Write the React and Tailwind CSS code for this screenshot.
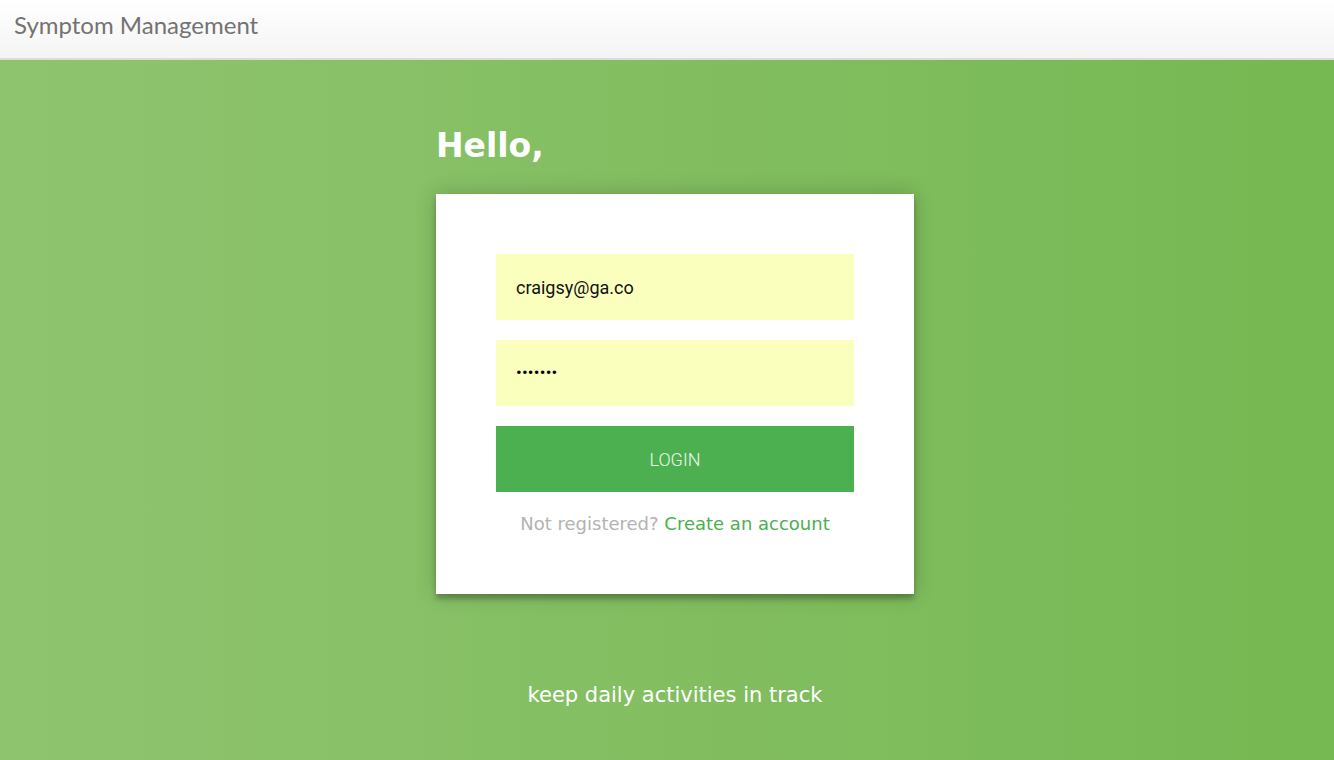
export default function App() {
  return (
    <div className="w-[1334px] h-[760px] flex flex-col overflow-hidden">
      <header className="h-[60px] shrink-0 bg-gradient-to-b from-white to-[#f4f4f4] border-b-2 border-[#dcdcdc] flex items-center px-[14px]">
        <span className="text-[24px] text-[#737373] pb-[8px] font-['Lato',sans-serif]">
          Symptom Management
        </span>
      </header>
      <main className="flex-1 bg-gradient-to-r from-[#8fc46f] to-[#76b852] flex flex-col items-center pl-[16px]">
        <div className="w-[478px] mt-[66px]">
          <h1 className="text-[33px] font-bold text-white leading-[40px] font-['DejaVu_Sans',Verdana,sans-serif]">
            Hello,
          </h1>
          <div className="mt-[28px] bg-white h-[400px] px-[60px] pt-[60px] shadow-[0_0_20px_rgba(0,0,0,0.2),0_5px_5px_rgba(0,0,0,0.24)] flex flex-col">
            <div className="h-[66px] bg-[#faffbd] flex items-center px-[20px] text-[18px] text-[#111] font-['Roboto',sans-serif]">
              craigsy@ga.co
            </div>
            <div className="mt-[20px] h-[66px] bg-[#faffbd] flex items-center px-[20px] text-[17px] text-black tracking-[0.2px] font-['Roboto',sans-serif]">
              •••••••
            </div>
            <div className="mt-[20px] h-[66px] bg-[#4caf50] flex items-center justify-center text-[18px] text-white/90 font-light uppercase font-['Roboto',sans-serif]">
              LOGIN
            </div>
            <p className="mt-[18px] text-center text-[18px] text-[#b3b3b3] font-['DejaVu_Sans',Verdana,sans-serif]">
              Not registered? <span className="text-[#4caf50]">Create an account</span>
            </p>
          </div>
        </div>
        <p className="mt-[86px] text-[21px] text-white font-['DejaVu_Sans',Verdana,sans-serif]">
          keep daily activities in track
        </p>
      </main>
    </div>
  );
}
